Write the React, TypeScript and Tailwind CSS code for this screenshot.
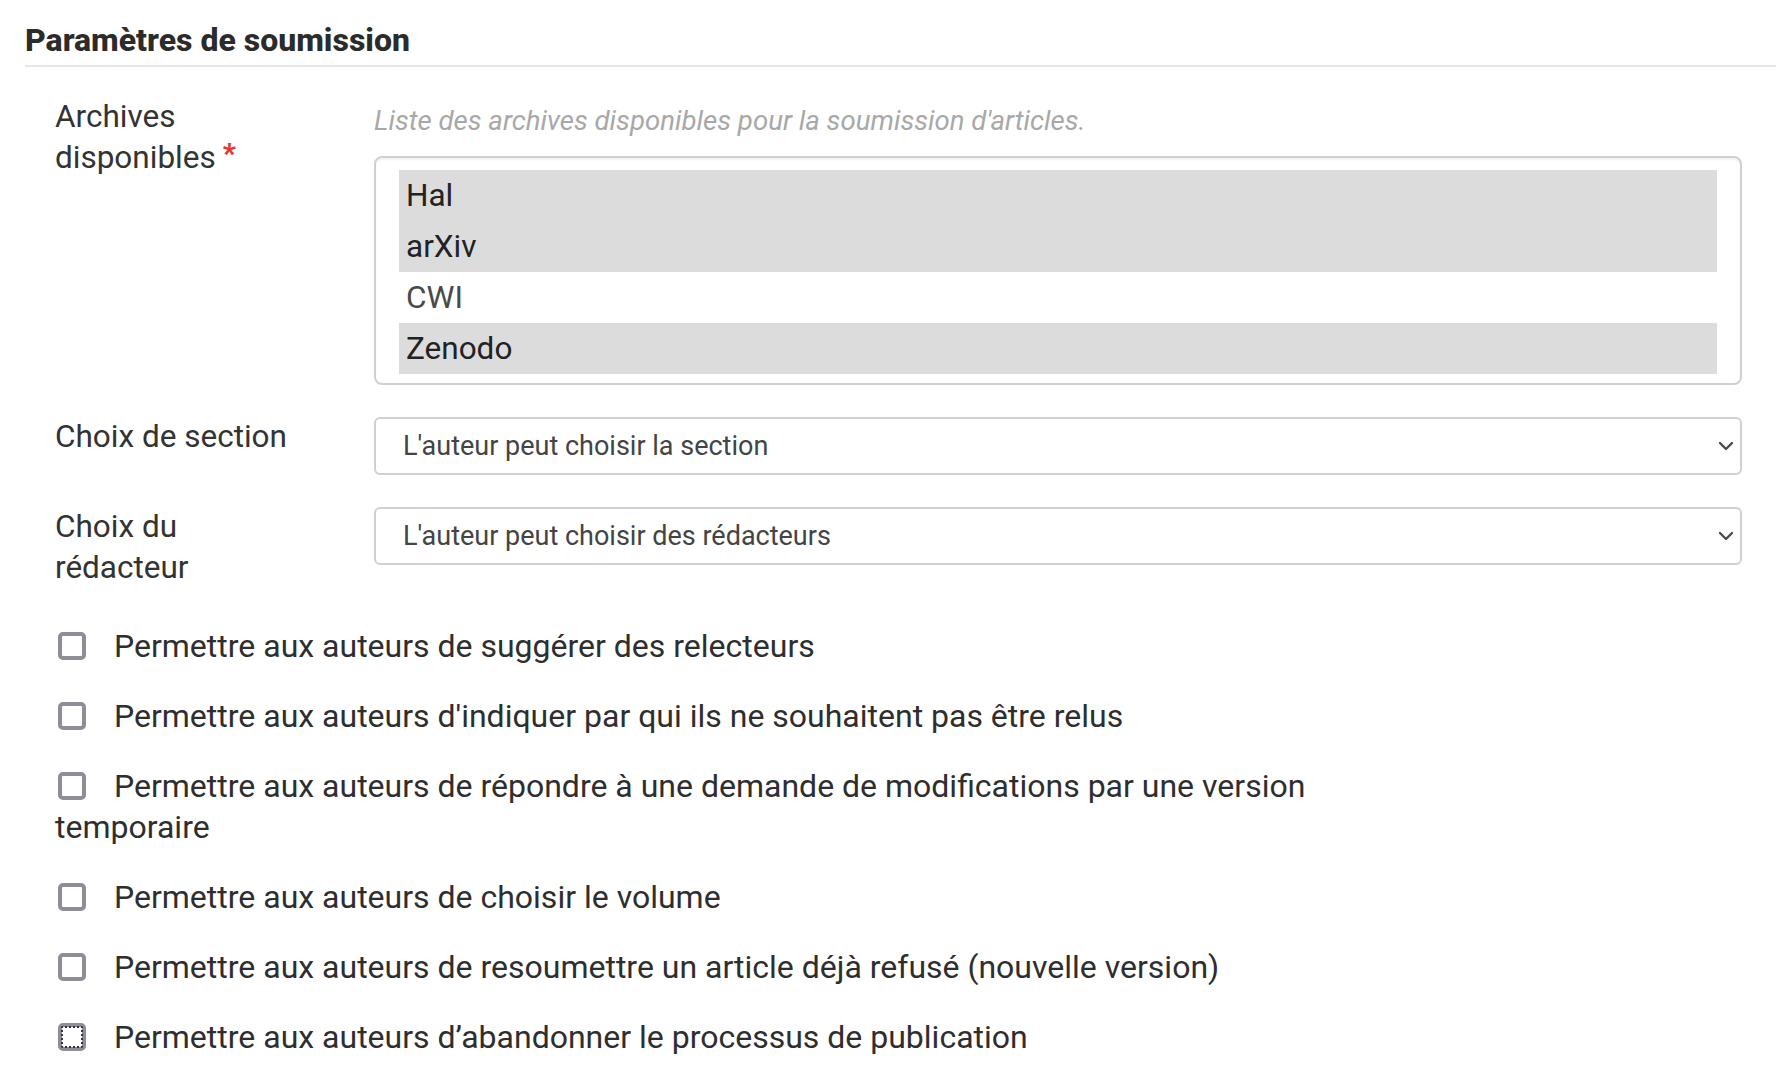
import { useState } from "react";

const archives = [
  { name: "Hal", selected: true },
  { name: "arXiv", selected: true },
  { name: "CWI", selected: false },
  { name: "Zenodo", selected: true },
];

const permissions = [
  "Permettre aux auteurs de suggérer des relecteurs",
  "Permettre aux auteurs d'indiquer par qui ils ne souhaitent pas être relus",
  "Permettre aux auteurs de répondre à une demande de modifications par une version temporaire",
  "Permettre aux auteurs de choisir le volume",
  "Permettre aux auteurs de resoumettre un article déjà refusé (nouvelle version)",
  "Permettre aux auteurs d\u2019abandonner le processus de publication",
];

const Chevron = () => (
  <svg width="16" height="10" viewBox="0 0 16 10" fill="none">
    <path
      d="M2 2l6 6 6-6"
      stroke="#4a4a4a"
      strokeWidth="2.4"
      strokeLinecap="round"
      strokeLinejoin="round"
    />
  </svg>
);

const FakeSelect = ({ value }: { value: string }) => (
  <div className="mt-[1px] flex h-[58px] flex-1 items-center justify-between rounded-[6px] border-2 border-[#d0d0d0] bg-white pl-[27px] pr-[6px]">
    <span className="text-[27px] leading-none text-[#444]">{value}</span>
    <Chevron />
  </div>
);

const Label = ({ children }: { children: React.ReactNode }) => (
  <div className="w-[319px] shrink-0">
    <p className="max-w-[255px] text-[31.5px] leading-[41px] text-[#333]">
      {children}
    </p>
  </div>
);

const App = () => {
  const [checked, setChecked] = useState<boolean[]>(
    permissions.map(() => false)
  );

  return (
    <div
      className="min-h-screen bg-white text-[#333]"
      style={{ fontFamily: "Roboto, 'Noto Sans', sans-serif" }}
    >
      <div className="pl-[25px] pt-[20px]">
        <h2 className="border-b-2 border-[#e6e6e6] pb-[5px] text-[32px] font-extrabold leading-[40px] text-[#2b2b2b]">
          Paramètres de soumission
        </h2>
      </div>

      <div className="pl-[55px] pr-[34px] pt-[29px]">
        {/* archives */}
        <div className="flex">
          <Label>
            Archives disponibles
            <span className="ml-[7px] align-top text-[28px] font-black leading-[34px] text-[#e3342f]">
              *
            </span>
          </Label>
          <div className="min-w-0 flex-1">
            <p className="pb-[15px] pt-[4px] text-[27.6px] italic leading-[41px] text-[#a8a8a8]">
              Liste des archives disponibles pour la soumission d'articles.
            </p>
            <div className="h-[229px] rounded-[8px] border-2 border-[#d0d0d0] px-[23px] pt-[12px] shadow-[inset_0_2px_2px_rgba(0,0,0,0.05)]">
              {archives.map((a) => (
                <div
                  key={a.name}
                  className={
                    a.selected
                      ? "flex h-[51px] items-center bg-[#dcdcdc] px-[7px] text-[31.5px] text-[#222]"
                      : "flex h-[51px] items-center px-[7px] text-[31.5px] text-[#4a4a4a]"
                  }
                >
                  {a.name}
                </div>
              ))}
            </div>
          </div>
        </div>

        {/* section */}
        <div className="mt-[31px] flex">
          <Label>Choix de section</Label>
          <FakeSelect value="L'auteur peut choisir la section" />
        </div>

        {/* redacteur */}
        <div className="mt-[31px] flex items-start">
          <Label>Choix du rédacteur</Label>
          <FakeSelect value="L'auteur peut choisir des rédacteurs" />
        </div>

        {/* checkboxes */}
        <div className="mt-[38px] flex max-w-[1335px] flex-col gap-[29px]">
          {permissions.map((text, i) => (
            <label
              key={text}
              className="block text-[32px] leading-[41px] text-[#2e2e2e]"
            >
              <input
                type="checkbox"
                checked={checked[i]}
                onChange={() =>
                  setChecked((c) => c.map((v, j) => (j === i ? !v : v)))
                }
                className={
                  i === permissions.length - 1
                    ? "relative top-[-3px] ml-[3px] mr-[28px] inline-block h-[28px] w-[28px] appearance-none rounded-[5px] border-4 border-[#8e8e98] bg-white align-middle outline-2 outline-offset-[-5px] outline-[#333] outline-dotted"
                    : "relative top-[-3px] ml-[3px] mr-[28px] inline-block h-[28px] w-[28px] appearance-none rounded-[5px] border-4 border-[#8e8e98] bg-white align-middle"
                }
              />
              {text}
            </label>
          ))}
        </div>
      </div>
    </div>
  );
};

export default App;
